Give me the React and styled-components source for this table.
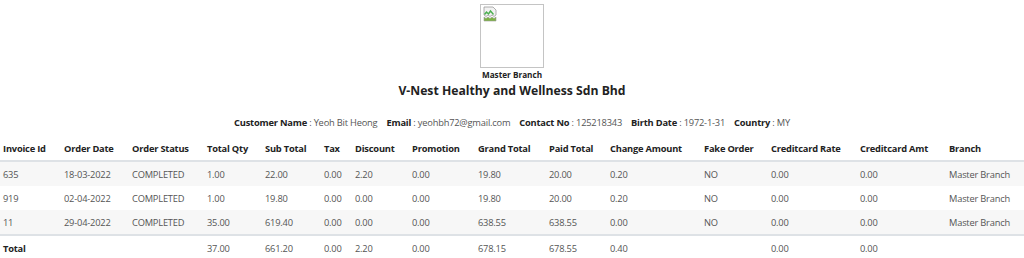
import React from "react";
import styled, { createGlobalStyle } from "styled-components";

const GlobalStyle = createGlobalStyle`
  body {
    margin: 0;
    background: #fff;
    font-family: "Open Sans", "Noto Sans", sans-serif;
    color: #212529;
  }
`;

const columns = [
  { title: "Invoice Id", width: 61 },
  { title: "Order Date", width: 68 },
  { title: "Order Status", width: 75 },
  { title: "Total Qty", width: 58 },
  { title: "Sub Total", width: 59 },
  { title: "Tax", width: 31 },
  { title: "Discount", width: 57 },
  { title: "Promotion", width: 66 },
  { title: "Grand Total", width: 71 },
  { title: "Paid Total", width: 61 },
  { title: "Change Amount", width: 94 },
  { title: "Fake Order", width: 67 },
  { title: "Creditcard Rate", width: 89 },
  { title: "Creditcard Amt", width: 89 },
  { title: "Branch", width: 78 },
];

const orders = [
  ["635", "18-03-2022", "COMPLETED", "1.00", "22.00", "0.00", "2.20", "0.00", "19.80", "20.00", "0.20", "NO", "0.00", "0.00", "Master Branch"],
  ["919", "02-04-2022", "COMPLETED", "1.00", "19.80", "0.00", "0.00", "0.00", "19.80", "20.00", "0.20", "NO", "0.00", "0.00", "Master Branch"],
  ["11", "29-04-2022", "COMPLETED", "35.00", "619.40", "0.00", "0.00", "0.00", "638.55", "638.55", "0.00", "NO", "0.00", "0.00", "Master Branch"],
];

const totals = ["37.00", "661.20", "0.00", "2.20", "0.00", "678.15", "678.55", "0.40", "", "0.00", "0.00", ""];

const customer = [
  ["Customer Name", "Yeoh Bit Heong"],
  ["Email", "yeohbh72@gmail.com"],
  ["Contact No", "125218343"],
  ["Birth Date", "1972-1-31"],
  ["Country", "MY"],
];

const Page = styled.div`
  width: 1024px;
`;

const Heading = styled.header`
  display: flex;
  flex-direction: column;
  align-items: center;
  padding-top: 4px;
`;

const Logo = styled.div`
  width: 62px;
  height: 62px;
  border: 1px solid #c4c4c4;
  margin-left: -1px;
  svg {
    display: block;
    margin: 1px 0 0 1px;
  }
`;

const BranchName = styled.div`
  margin-top: 1px;
  font-size: 8.2px;
  font-weight: 700;
  line-height: 12px;
  color: #222;
`;

const CompanyName = styled.h1`
  margin: 0;
  font-size: 12.2px;
  font-weight: 700;
  line-height: 20px;
  color: #222;
`;

const CustomerLine = styled.div`
  margin-top: 15px;
  display: flex;
  gap: 9px;
  font-size: 9.3px;
  letter-spacing: -0.2px;
  line-height: 14px;
`;

const Field = styled.span`
  b {
    font-weight: 700;
    color: #222;
  }
  span {
    color: #555;
    font-weight: 400;
  }
`;

const Table = styled.table`
  width: 1024px;
  margin-top: 6px;
  border-collapse: collapse;
  table-layout: fixed;
  font-size: 9.3px;
  letter-spacing: -0.2px;
`;

const HeadCell = styled.th`
  text-align: left;
  font-weight: 700;
  color: #222;
  padding: 0 0 0 3px;
  height: 24px;
  border-bottom: 2px solid #dee2e6;
  white-space: nowrap;
  overflow: hidden;
`;

const Row = styled.tr`
  background: ${(p) => (p.$striped ? "#f7f7f7" : "#fff")};
  border-top: ${(p) => (p.$total ? "2px solid #dee2e6" : "none")};
`;

const Cell = styled.td`
  padding: 0 0 0 3px;
  height: 24px;
  color: #555;
  font-weight: ${(p) => (p.$bold ? 700 : 400)};
  ${(p) => p.$bold && "color: #222;"}
  white-space: nowrap;
  overflow: hidden;
`;

const BrokenImage = () => (
  <svg width="16" height="16" viewBox="0 0 16 16">
    <path d="M2 1h9l3 3v5l-2 1.5-2-1.5-2 1.5-2-1.5-2 1.5-2-1.5z" fill="#f2f2f2" stroke="#9a9a9a" strokeWidth="0.8" />
    <path d="M2.5 8.5l2-2.5 2 2 2-3 3 3.5" fill="none" stroke="#4caf50" strokeWidth="1.4" />
    <path d="M2 11l2 1.5 2-1.5 2 1.5 2-1.5 2 1.5 2-1.5V15H2z" fill="#7cb342" stroke="#9a9a9a" strokeWidth="0.6" />
  </svg>
);

export default function App() {
  return (
    <Page>
      <GlobalStyle />
      <Heading>
        <Logo>
          <BrokenImage />
        </Logo>
        <BranchName>Master Branch</BranchName>
        <CompanyName>V-Nest Healthy and Wellness Sdn Bhd</CompanyName>
        <CustomerLine>
          {customer.map(([label, value]) => (
            <Field key={label}>
              <b>{label}</b> <span>: {value}</span>
            </Field>
          ))}
        </CustomerLine>
      </Heading>
      <Table>
        <colgroup>
          {columns.map((c) => (
            <col key={c.title} style={{ width: c.width }} />
          ))}
        </colgroup>
        <thead>
          <tr>
            {columns.map((c) => (
              <HeadCell key={c.title}>{c.title}</HeadCell>
            ))}
          </tr>
        </thead>
        <tbody>
          {orders.map((o, i) => (
            <Row key={o[0]} $striped={i % 2 === 0}>
              {o.map((v, j) => (
                <Cell key={j}>{v}</Cell>
              ))}
            </Row>
          ))}
          <Row $total>
            <Cell $bold>Total</Cell>
            <Cell />
            <Cell />
            {totals.map((v, j) => (
              <Cell key={j}>{v}</Cell>
            ))}
          </Row>
        </tbody>
      </Table>
    </Page>
  );
}
